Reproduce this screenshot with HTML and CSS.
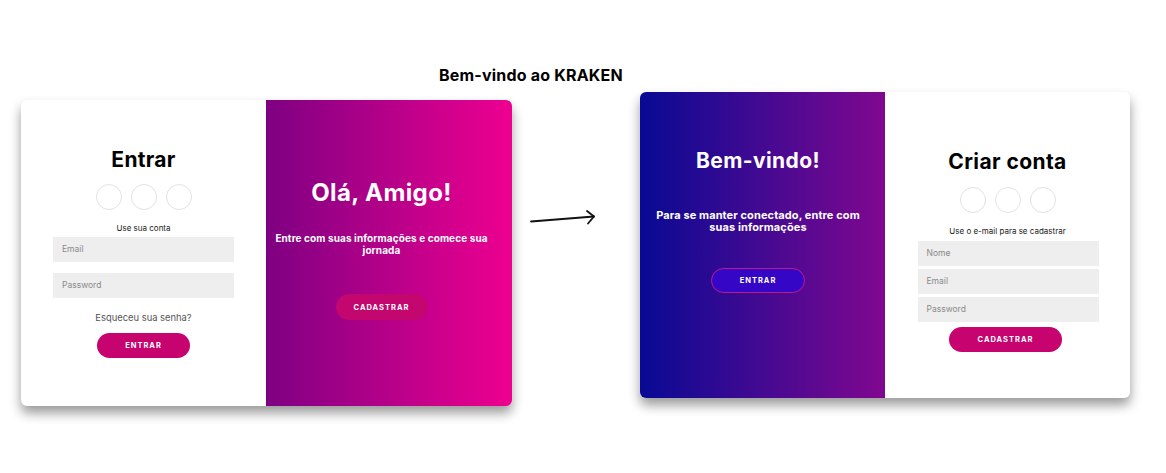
FILE: index.html
```html
<!DOCTYPE html>
<html lang="pt-BR">
<head>
<meta charset="utf-8">
<title>Bem-vindo ao KRAKEN</title>
<link rel="stylesheet" href="styles.css">
</head>
<body>
<main class="page">
  <h1 class="page-title">Bem-vindo ao KRAKEN</h1>
  <div class="row">
    <section class="card card-login">
      <div class="panel panel-form">
        <h2 class="form-title">Entrar</h2>
        <div class="socials"><span class="social"></span><span class="social"></span><span class="social"></span></div>
        <p class="hint">Use sua conta</p>
        <div class="fields fields-login">
          <div class="field">Email</div>
          <div class="field">Password</div>
        </div>
        <p class="forgot">Esqueceu sua senha?</p>
        <button class="btn btn-pink btn-entrar">ENTRAR</button>
      </div>
      <div class="panel panel-pink">
        <h2 class="overlay-title">Olá, Amigo!</h2>
        <p class="overlay-text">Entre com suas informações e comece sua<br>jornada</p>
        <button class="btn btn-ghost-pink">CADASTRAR</button>
      </div>
    </section>

    <div class="arrow">
      <svg width="128" height="30" viewBox="0 0 128 30" fill="none" stroke="#111" stroke-width="1.8" stroke-linecap="round" stroke-linejoin="round">
        <path d="M19 19.5 L82 14.5"/>
        <path d="M75 9 L82 14.5 L76 21.5"/>
      </svg>
    </div>

    <section class="card card-signup">
      <div class="panel panel-blue">
        <h2 class="overlay-title overlay-title-sm">Bem-vindo!</h2>
        <p class="overlay-text overlay-text-blue">Para se manter conectado, entre com<br>suas informações</p>
        <button class="btn btn-violet">ENTRAR</button>
      </div>
      <div class="panel panel-form">
        <h2 class="form-title form-title-signup">Criar conta</h2>
        <div class="socials"><span class="social"></span><span class="social"></span><span class="social"></span></div>
        <p class="hint hint-signup">Use o e-mail para se cadastrar</p>
        <div class="fields fields-signup">
          <div class="field">Nome</div>
          <div class="field">Email</div>
          <div class="field">Password</div>
        </div>
        <button class="btn btn-pink btn-cadastrar">CADASTRAR</button>
      </div>
    </section>
  </div>
</main>
</body>
</html>
```

FILE: styles.css
```css
* { box-sizing: border-box; }

html, body {
  margin: 0;
  padding: 0;
  background: #ffffff;
}

body {
  width: 1166px;
  height: 473px;
  overflow: hidden;
  font-family: Inter, "Open Sans", "Liberation Sans", sans-serif;
  color: #000;
}

.page {
  padding-top: 66px;
}

.page-title {
  margin: 0 0 8px 0;
  padding-left: 439px;
  font-size: 16px;
  line-height: 18px;
  font-weight: 700;
  letter-spacing: 0.2px;
  color: #000;
}

.row {
  display: flex;
  align-items: flex-start;
  padding-left: 21px;
}

.card {
  display: flex;
  height: 306px;
  border-radius: 6px;
  box-shadow: 0 7px 12px rgba(0, 0, 0, 0.4);
  overflow: hidden;
  background: #fff;
}

.card-login {
  width: 491px;
  margin-top: 8px;
}

.card-signup {
  width: 490px;
}

.panel {
  height: 100%;
  display: flex;
  flex-direction: column;
  align-items: center;
}

.card-login .panel-form { width: 245px; padding-top: 47px; }
.card-login .panel-pink { width: 246px; padding-right: 15px; }
.card-signup .panel-blue { width: 245px; padding-right: 9px; }
.card-signup .panel-form { width: 245px; padding-top: 57px; }

.panel-pink {
  background: linear-gradient(to right, #7e0082 0%, #ee0090 100%);
  padding-top: 78px;
  color: #fff;
}

.panel-blue {
  background: linear-gradient(to right, #080a94 0%, #80088f 100%);
  padding-top: 56px;
  color: #fff;
}

.form-title {
  margin: 0;
  font-size: 21px;
  line-height: 26px;
  font-weight: 700;
  letter-spacing: 0.3px;
  color: #000;
}

.form-title-signup { letter-spacing: 0.4px; }

.socials {
  display: flex;
  gap: 9px;
  margin-top: 11px;
}

.form-title-signup + .socials { margin-top: 12px; }

.social {
  width: 26px;
  height: 26px;
  border-radius: 50%;
  border: 1px solid #e2e2e2;
}

.hint {
  margin: 12px 0 0 0;
  font-size: 8px;
  line-height: 12px;
  color: #222;
}

.fields {
  display: flex;
  flex-direction: column;
  width: 181px;
}

.fields-login { margin-top: 3px; gap: 11px; }
.fields-signup { margin-top: 4px; gap: 3px; }

.card-signup .fields { margin-left: 1px; }

.field {
  height: 25px;
  background: #eeeeee;
  font-size: 8.5px;
  line-height: 25px;
  padding-left: 9px;
  color: #8a8a8a;
}

.forgot {
  margin: 13px 0 0 0;
  font-size: 9.4px;
  line-height: 14px;
  color: #555;
}

.btn {
  display: block;
  height: 25px;
  border: 0;
  border-radius: 13px;
  font-family: Inter, "Liberation Sans", sans-serif;
  font-size: 7.5px;
  font-weight: 700;
  letter-spacing: 1px;
  color: #fff;
  padding: 0;
}

.btn-pink { background: #c6036f; }

.btn-entrar { width: 93px; margin-top: 8px; }
.btn-cadastrar { width: 113px; margin-top: 5px; margin-right: 4px; }

.btn-ghost-pink {
  width: 91px;
  height: 26px;
  margin-top: 38px;
  background: #c4066f;
}

.btn-violet {
  width: 94px;
  margin-top: 35px;
  background: #3606c6;
  border: 1px solid #c0188c;
}

.overlay-title {
  margin: 0;
  font-size: 24px;
  line-height: 30px;
  font-weight: 700;
  letter-spacing: 0.4px;
  color: #fff;
}

.overlay-title-sm {
  font-size: 21px;
  line-height: 26px;
}

.overlay-text {
  margin: 24px 0 0 0;
  font-size: 10px;
  line-height: 12px;
  font-weight: 700;
  letter-spacing: 0.1px;
  text-align: center;
  color: #fff;
  white-space: nowrap;
}

.overlay-text-blue {
  margin-top: 35px;
  font-size: 11px;
}

.arrow {
  width: 128px;
  margin-top: 110px;
  display: flex;
}
```
